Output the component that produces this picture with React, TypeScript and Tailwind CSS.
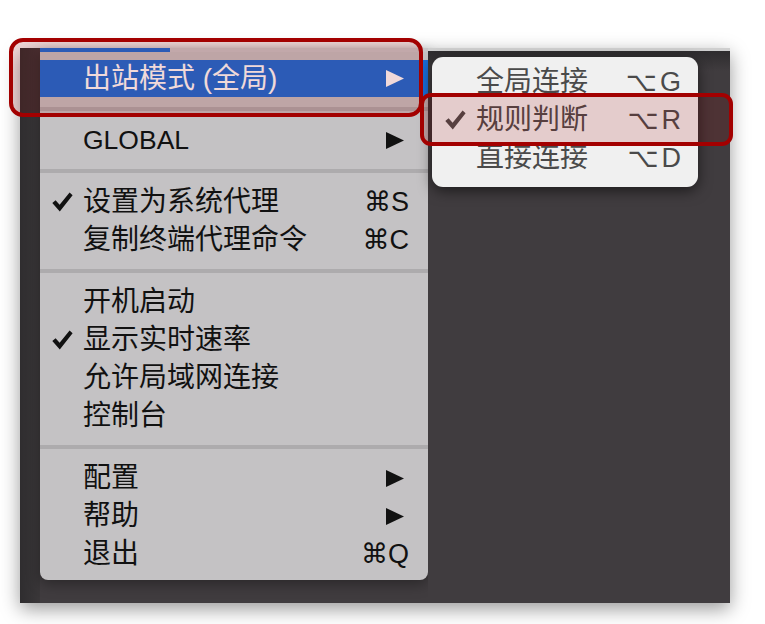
import React from "react";

const FONT = "font-['Liberation_Sans','DejaVu_Sans','Noto_Sans_CJK_SC',sans-serif]";

function Check({ color = "#111" }: { color?: string }) {
  return (
    <svg width="21" height="20" viewBox="0 0 21 20">
      <polygon points="0.3,11 3.6,8.2 7.6,12.8 17.6,0.6 20.6,3.2 7.8,19.4" fill={color} />
    </svg>
  );
}

function Arrow({ color = "#111" }: { color?: string }) {
  return (
    <svg width="18" height="17" viewBox="0 0 18 17">
      <polygon points="0,0 18,8.5 0,17" fill={color} />
    </svg>
  );
}

type Item = { label: string; check?: boolean; shortcut?: string; arrow?: boolean; latin?: boolean };

function Row({ item }: { item: Item }) {
  return (
    <div className="flex items-center h-[38px] pl-[12px] pr-[19px] text-[#111]">
      <div className="w-[31px] flex items-center">{item.check ? <Check /> : null}</div>
      <div className={item.latin ? "flex-1 text-[26.5px] leading-none" : "flex-1 text-[28px] leading-none"}>{item.label}</div>
      {item.arrow ? (
        <div className="mr-[5px] flex items-center">
          <Arrow />
        </div>
      ) : null}
      {item.shortcut ? <div className="text-[27px] leading-none">{item.shortcut}</div> : null}
    </div>
  );
}

function Sep() {
  return (
    <div className="h-[24px] flex flex-col justify-center">
      <div className="h-[4px] bg-[#adabad]" />
    </div>
  );
}

function SubRow({ label, keyName, check }: { label: string; keyName: string; check?: boolean }) {
  return (
    <div className="flex items-center h-[38px] pl-[13px] pr-[17px] text-[#4a4a4a]">
      <div className="w-[31px] flex items-center">{check ? <Check color="#4a4a4a" /> : null}</div>
      <div className="flex-1 text-[28px] leading-none">{label}</div>
      <div className="flex items-center text-[27px] leading-none">
        <span className="mr-[3px]">⌥</span>
        <span>{keyName}</span>
      </div>
    </div>
  );
}

export default function App() {
  return (
    <div className={`relative w-[765px] h-[624px] bg-white overflow-hidden ${FONT}`}>
      <div className="pt-[48px] pl-[20px]">
        <div className="flex w-[710px] h-[555px] bg-[#403c3f] shadow-[0_6px_18px_rgba(0,0,0,0.4)]">
          <div className="w-[20px] bg-gradient-to-r from-[#2f2d2f] to-[#3a3739]" />
          <div className="w-[388px] self-start bg-[#c4c2c4] rounded-b-[8px] pb-[7px] shadow-[0_4px_14px_rgba(0,0,0,0.35)]">
            <div className="h-[4px] flex">
              <div className="w-[130px] bg-[#186cd6]" />
              <div className="flex-1 bg-[#c8c6c8]" />
            </div>
            <div className="h-[8px]" />
            <div className="flex items-center h-[37px] pl-[12px] pr-[19px] bg-[#186cd6] text-white">
              <div className="w-[31px]" />
              <div className="flex-1 text-[28px] leading-none">出站模式 (全局)</div>
              <div className="mr-[5px] flex items-center">
                <Arrow color="#ffffff" />
              </div>
            </div>
            <Sep />
            <Row item={{ label: "GLOBAL", arrow: true, latin: true }} />
            <Sep />
            <Row item={{ label: "设置为系统代理", check: true, shortcut: "⌘S" }} />
            <Row item={{ label: "复制终端代理命令", shortcut: "⌘C" }} />
            <Sep />
            <Row item={{ label: "开机启动" }} />
            <Row item={{ label: "显示实时速率", check: true }} />
            <Row item={{ label: "允许局域网连接" }} />
            <Row item={{ label: "控制台" }} />
            <Sep />
            <Row item={{ label: "配置", arrow: true }} />
            <Row item={{ label: "帮助", arrow: true }} />
            <Row item={{ label: "退出", shortcut: "⌘Q" }} />
          </div>
          <div className="flex-1 border-t-[3px] border-[#cfcfcf] bg-gradient-to-b from-[#2e2c2e] via-[#403c3f] to-[#403c3f] bg-[length:100%_40px] bg-no-repeat bg-[#403c3f]" />
        </div>
      </div>

      {/* submenu */}
      <div className="absolute left-[432px] top-[57px] w-[266px] h-[130px] bg-[#f0f0f0] rounded-[11px] pt-[6px] shadow-[0_4px_14px_rgba(0,0,0,0.55)]">
        <SubRow label="全局连接" keyName="G" />
        <SubRow label="规则判断" keyName="R" check />
        <SubRow label="直接连接" keyName="D" />
      </div>

      {/* highlight boxes */}
      <div className="absolute left-[9px] top-[38px] w-[414px] h-[79px] border-[4px] border-[#a30000] rounded-[14px] bg-[rgba(160,0,0,0.15)]" />
      <div className="absolute left-[420px] top-[93px] w-[313px] h-[53px] border-[4px] border-[#a30000] rounded-[11px] bg-[rgba(160,0,0,0.15)]" />
    </div>
  );
}
